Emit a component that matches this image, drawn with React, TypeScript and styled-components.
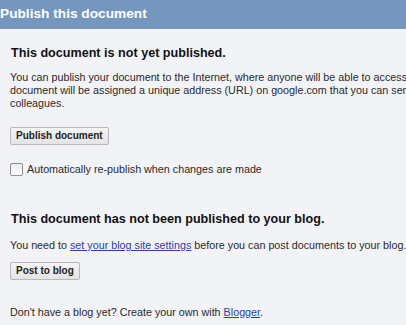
import React from "react";
import styled, { createGlobalStyle } from "styled-components";

const Global = createGlobalStyle`
  html, body {
    margin: 0;
    padding: 0;
    background: #f2f3f7;
    overflow: hidden;
  }
  body {
    font-family: "Liberation Sans", Arial, sans-serif;
  }
`;

const Page = styled.div`
  width: 406px;
  height: 325px;
  overflow: hidden;
  background: #f2f3f7;
  display: flex;
  flex-direction: column;
`;

const Header = styled.div`
  height: 29px;
  line-height: 28px;
  background: #7597be;
  color: #ffffff;
  font-size: 13.7px;
  font-weight: bold;
  padding-left: 0;
  white-space: nowrap;
`;

const Body = styled.div`
  padding: 0 0 0 10px;
  display: flex;
  flex-direction: column;
  align-items: flex-start;
`;

const Heading = styled.h2<{ $top: number }>`
  margin: ${(p) => p.$top}px 0 0 1px;
  font-size: 12.6px;
  line-height: 15px;
  font-weight: bold;
  color: #111;
  white-space: nowrap;
`;

const Text = styled.p<{ $top: number }>`
  margin: ${(p) => p.$top}px 0 0 0;
  font-size: 10.75px;
  line-height: 13px;
  color: #2a2a2a;
  white-space: nowrap;
`;

const Link = styled.a`
  color: #2e3d9c;
  text-decoration: underline;
  cursor: pointer;
`;

const Button = styled.button<{ $top: number }>`
  margin: ${(p) => p.$top}px 0 0 0;
  height: 18px;
  padding: 0 5px;
  border: 1px solid #b8b8b8;
  border-radius: 2px;
  background: linear-gradient(#f4f4f4, #e4e4e4);
  font-family: "Liberation Sans", Arial, sans-serif;
  font-size: 10px;
  font-weight: bold;
  color: #222;
  line-height: 16px;
  white-space: nowrap;
`;

const CheckRow = styled.label<{ $top: number }>`
  margin: ${(p) => p.$top}px 0 0 0;
  display: flex;
  align-items: center;
  gap: 4px;
  font-size: 10.75px;
  line-height: 13px;
  color: #2a2a2a;
  white-space: nowrap;
`;

const Check = styled.input`
  appearance: none;
  margin: 0;
  width: 13px;
  height: 13px;
  border: 1px solid #8e8f8f;
  border-radius: 2px;
  background: linear-gradient(#ececec, #ffffff);
  box-sizing: border-box;
`;

export default function App() {
  return (
    <Page>
      <Global />
      <Header>Publish this document</Header>
      <Body>
        <Heading $top={17}>This document is not yet published.</Heading>
        <Text $top={10}>
          You can publish your document to the Internet, where anyone will be able to access it. The
          <br />
          document will be assigned a unique address (URL) on google.com that you can send to friends and
          <br />
          colleagues.
        </Text>
        <Button $top={17}>Publish document</Button>
        <CheckRow $top={18}>
          <Check type="checkbox" />
          Automatically re-publish when changes are made
        </CheckRow>
        <Heading $top={36}>This document has not been published to your blog.</Heading>
        <Text $top={12}>
          You need to <Link>set your blog site settings</Link> before you can post documents to your blog.
        </Text>
        <Button $top={10}>Post to blog</Button>
        <Text $top={26}>
          Don't have a blog yet? Create your own with <Link>Blogger</Link>.
        </Text>
      </Body>
    </Page>
  );
}
